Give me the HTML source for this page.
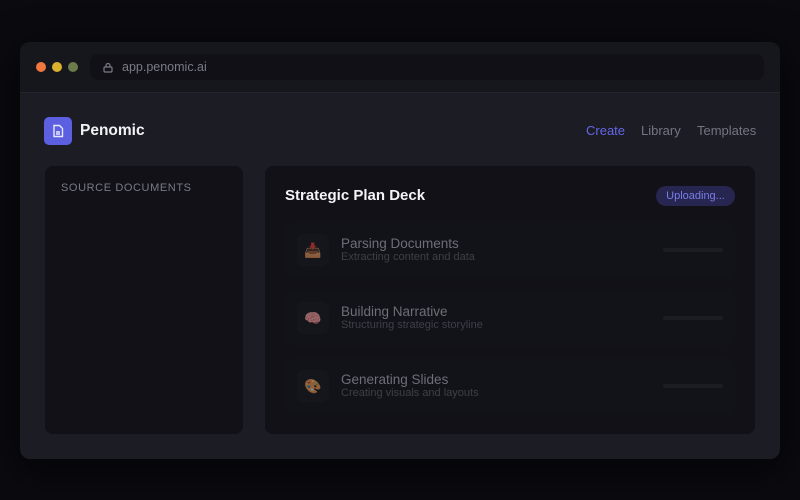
<!DOCTYPE html>
<html><head><style>
*{margin:0;padding:0;box-sizing:border-box}
body{width:800px;height:500px;background:#0a0a0f;font-family:"Liberation Sans",sans-serif;position:relative;overflow:hidden}
.win{position:absolute;left:20px;top:42px;width:760px;height:417px;background:#1c1c25;border-radius:10px;overflow:hidden;box-shadow:0 10px 40px rgba(0,0,0,.6)}
.bar{height:51px;background:#16161d;border-bottom:1px solid #24242d;position:relative}
.dot{position:absolute;top:20px;width:10px;height:10px;border-radius:50%}
.url{position:absolute;left:70px;top:12px;width:674px;height:26px;background:#101016;border-radius:8px;color:#7b7b85;font-size:12.5px;line-height:26px;padding-left:32px}
.abs{position:absolute}
.panel{position:absolute;background:#111117;border-radius:8px}
.step{position:absolute;left:20px;width:450px;height:56px;background:#121219;border-radius:8px}
.ic{position:absolute;left:12px;top:12px;width:32px;height:32px;background:#19191f;border-radius:7px;font-size:14px;text-align:center;line-height:32px;opacity:.55}
.t{position:absolute;left:56px;top:14px;color:#6e6e78;font-size:13.5px}
.s{position:absolute;left:56px;top:29px;color:#3f3f48;font-size:11px}
.pb{position:absolute;left:378px;top:26px;width:60px;height:4px;background:#1c1c23;border-radius:2px}
</style></head><body>
<div class="win">
<div class="bar">
<div class="dot" style="left:16px;background:#f0783f"></div>
<div class="dot" style="left:32px;background:#d9b12c"></div>
<div class="dot" style="left:48px;background:#6b7b4a"></div>
<div class="url"><svg class="abs" style="left:13px;top:8px" width="10" height="11" viewBox="0 0 10 11" fill="none" stroke="#7b7b85" stroke-width="1.2"><rect x="1" y="5" width="8" height="5" rx="1"/><path d="M3 5V3.5a2 2 0 0 1 4 0V5"/></svg>app.penomic.ai</div>
</div>
<div class="abs" style="left:24px;top:75px;width:28px;height:28px;background:#5b5fe0;border-radius:5px">
<svg width="28" height="28" viewBox="0 0 28 28" fill="none" stroke="#e8e8ff" stroke-width="1.4"><path d="M10 8.5h5.5l3 3v8h-8.5z"/><path d="M12 15h4M12 17h4"/></svg></div>
<div class="abs" style="left:60px;top:80px;color:#f2f2f5;font-weight:bold;font-size:15.5px">Penomic</div>
<div class="abs" style="left:566px;top:81px;color:#6466e6;font-size:13px">Create</div>
<div class="abs" style="left:621px;top:81px;color:#757580;font-size:13px">Library</div>
<div class="abs" style="left:677px;top:81px;color:#757580;font-size:13px">Templates</div>
<div class="panel" style="left:25px;top:124px;width:198px;height:268px">
<div class="abs" style="left:16px;top:16px;color:#7a7a85;font-size:11px;letter-spacing:.6px">SOURCE DOCUMENTS</div></div>
<div class="panel" style="left:245px;top:124px;width:490px;height:268px">
<div class="abs" style="left:20px;top:21px;color:#f4f4f7;font-weight:bold;font-size:15px">Strategic Plan Deck</div>
<div class="abs" style="left:391px;top:20px;width:79px;height:20px;background:#262650;border-radius:10px;color:#7b7de8;font-size:11px;text-align:center;line-height:20px">Uploading...</div>
<div class="step" style="top:56px"><div class="ic">📥</div><div class="t">Parsing Documents</div><div class="s">Extracting content and data</div><div class="pb"></div></div>
<div class="step" style="top:124px"><div class="ic">🧠</div><div class="t">Building Narrative</div><div class="s">Structuring strategic storyline</div><div class="pb"></div></div>
<div class="step" style="top:192px"><div class="ic">🎨</div><div class="t">Generating Slides</div><div class="s">Creating visuals and layouts</div><div class="pb"></div></div>
</div>
</div>
</body></html>
